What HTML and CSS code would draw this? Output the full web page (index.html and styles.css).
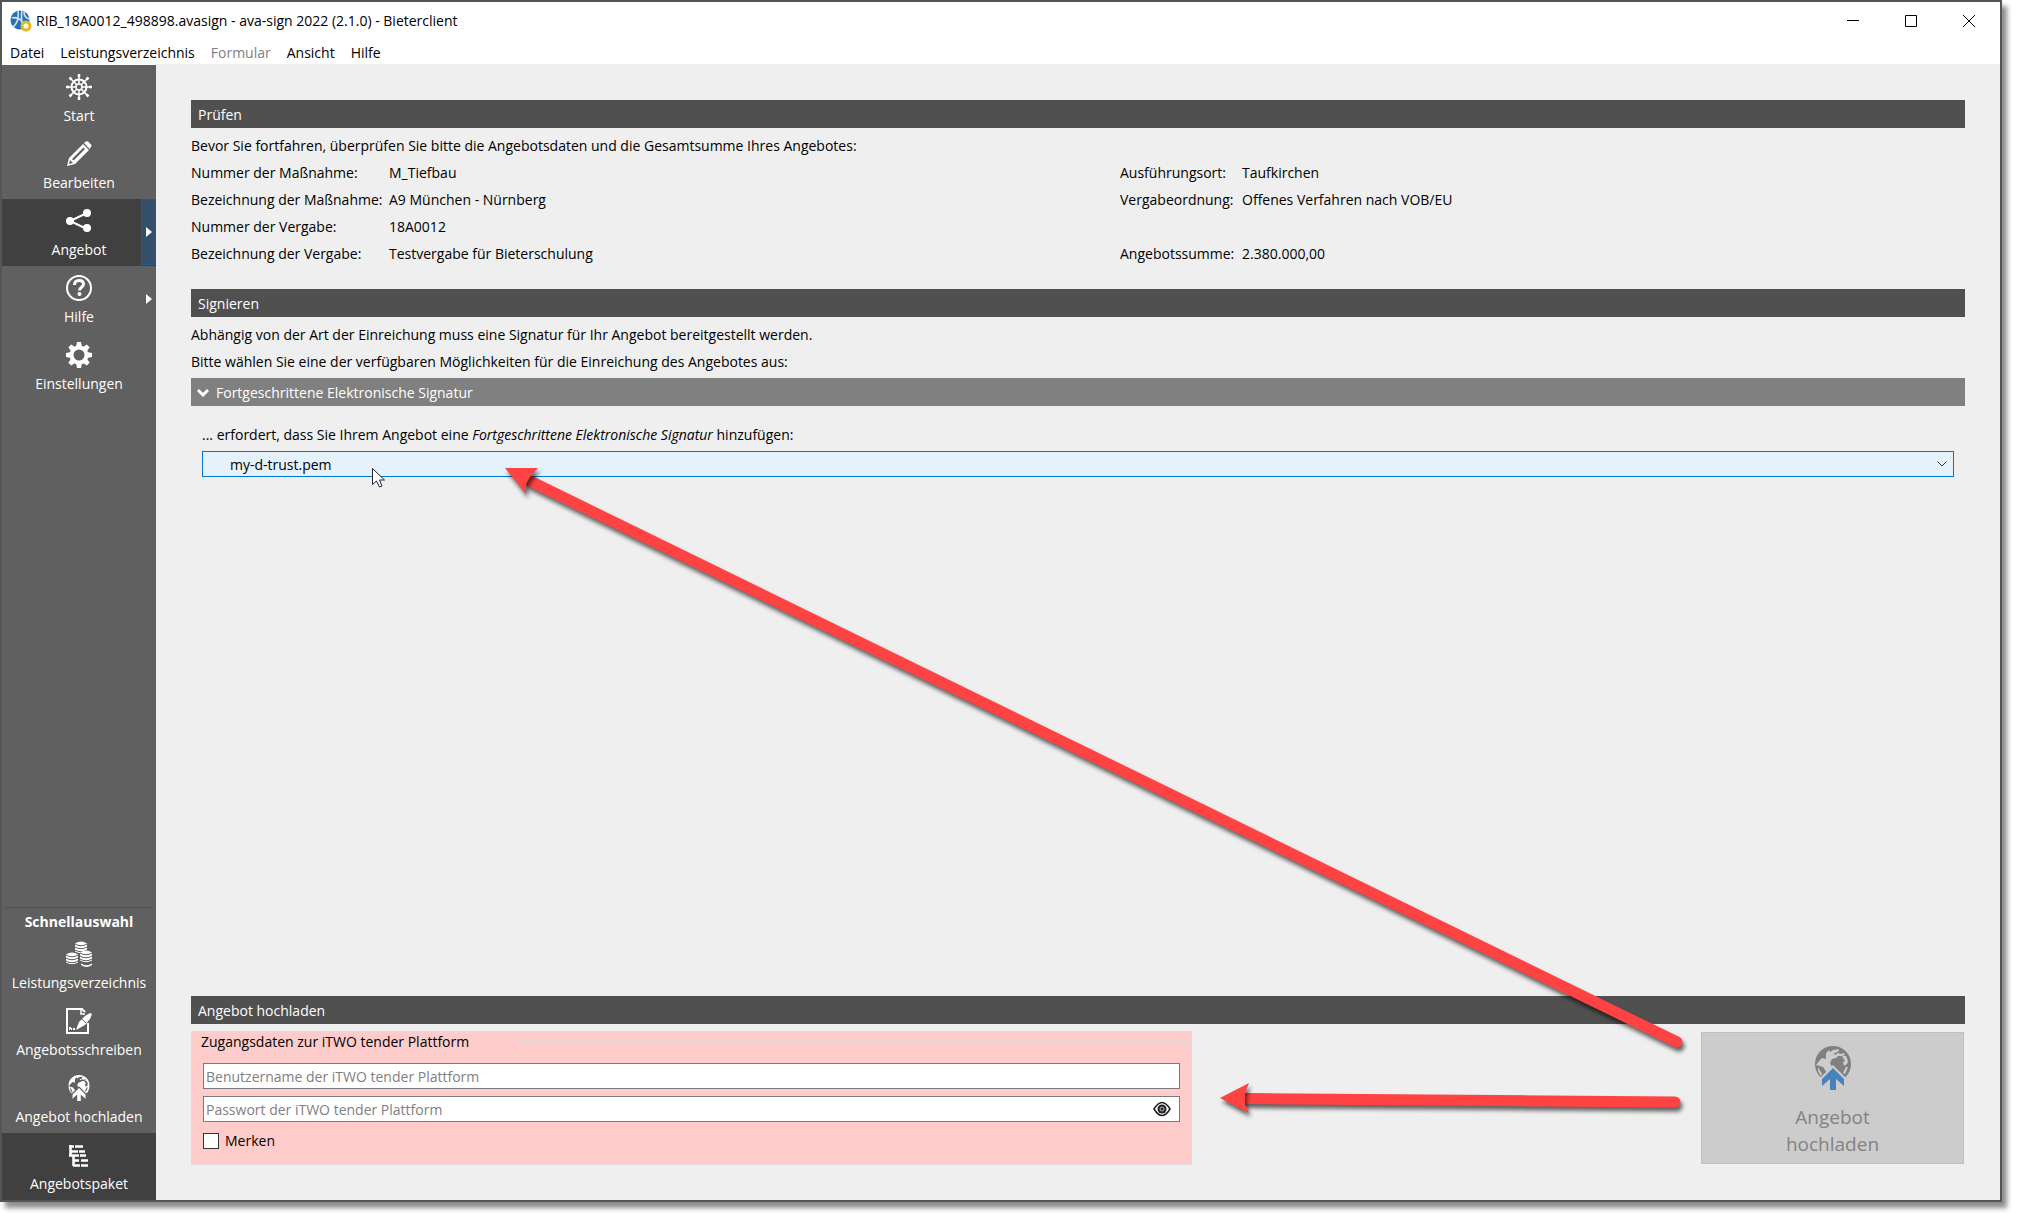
FILE: index.html
```html
<!DOCTYPE html>
<html lang="de">
<head>
<meta charset="utf-8">
<title>RIB_18A0012_498898.avasign - ava-sign 2022 (2.1.0) - Bieterclient</title>
<link rel="stylesheet" href="styles.css">
</head>
<body>
<svg class="defs" aria-hidden="true">
  <symbol id="globe" viewBox="0 0 36 44">
    <mask id="globe-mask">
      <rect width="36" height="44" fill="#fff"/>
      <path fill="#000" d="M4 15l3-3 4 1V7l3-3 1 2 3-2 6-1-1 3-4 1 1 2 3-2 3 1 3-1 1 2-3 1-4 0-2 2-4 1-2 4 2 4 3 1v4l-8 1-4-6-7-2z"/>
      <path fill="#000" d="M27 10l4 0 2 5-1 3-3 2-1-4 2-1z"/>
      <path fill="#000" d="M31 21l2 0-3 7-2-1z"/>
      <path fill="#000" d="M3 21l4 7-1 2-3-5z"/>
      <path fill="#000" d="M18 19L4 33v11h28V33z"/>
    </mask>
    <g mask="url(#globe-mask)">
      <circle cx="18" cy="18" r="18"/>
    </g>
    <path class="globe-arrow" d="M18 22l11 11v7l-8-7v11h-6V33l-8 7v-7z"/>
  </symbol>
</svg>
<div class="window">
  <header class="titlebar">
    <svg class="app-logo" viewBox="0 0 22 22" aria-hidden="true">
      <circle cx="10" cy="10" r="9.500" fill="#2a6fb5"/>
      <path d="M8 0c1 8-1 14-5 17M12 0c-1 6-1 10 1 19M2 8c4-1 9 0 13 8M14 2c0 4 2 6 5 7" fill="none" stroke="#cfe3f5" stroke-width="1.600"/>
      <circle cx="16" cy="16" r="4" fill="#fff" stroke="#e5b822" stroke-width="3"/>
    </svg>
    <h1 class="title">RIB_18A0012_498898.avasign - ava-sign 2022 (2.1.0) - Bieterclient</h1>
    <div class="window-controls">
      <button class="control" type="button" aria-label="Minimieren"><svg viewBox="0 0 12 12"><path d="M0 5.500h12"/></svg></button>
      <button class="control" type="button" aria-label="Maximieren"><svg viewBox="0 0 12 12"><path d="M.5.500h11v11H.5z"/></svg></button>
      <button class="control" type="button" aria-label="Schließen"><svg viewBox="0 0 12 12"><path d="M0 0l12 12M12 0L0 12"/></svg></button>
    </div>
  </header>
  <nav class="menubar" aria-label="Menü">
    <button class="menu" type="button">Datei</button>
    <button class="menu" type="button">Leistungsverzeichnis</button>
    <button class="menu" type="button" disabled>Formular</button>
    <button class="menu" type="button">Ansicht</button>
    <button class="menu" type="button">Hilfe</button>
  </nav>
  <div class="body">
    <aside class="sidebar">
      <button class="nav-item" type="button">
        <svg class="icon" viewBox="0 0 26 26"><g fill="none" stroke="#fff"><circle cx="13" cy="13" r="7.500" stroke-width="2"/><circle cx="13" cy="13" r="3" stroke-width="1.500"/><path d="M13 0v10M13 16v10M0 13h10M16 13h10M4 4l7 7M15 15l7 7M22 4l-7 7M11 15l-7 7" stroke-width="1.500"/><path d="M13 0v3M13 23v3M0 13h3M23 13h3M3.500 3.500l2 2M20.500 20.500l2 2M22.500 3.500l-2 2M5.500 20.500l-2 2" stroke-width="2.500"/></g></svg>
        <span>Start</span>
      </button>
      <button class="nav-item" type="button">
        <svg class="icon" viewBox="0 0 26 26"><path fill="#fff" fill-rule="evenodd" d="M1 25l2-8L17 3l6 6L9 23zM3 23l4-1-3-3zM6 18l1.500 1.500L19 8l-1.500-1.500z"/><path fill="#fff" d="M18 2l2-1.500q1-.5 2 0l3 3q1 1 0 2.500l-1.500 2z"/></svg>
        <span>Bearbeiten</span>
      </button>
      <div class="nav-split active">
        <button class="nav-item" type="button">
          <svg class="icon" viewBox="0 0 26 26"><path d="M21 5L4 13l17 8" fill="none" stroke="#fff" stroke-width="2"/><g fill="#fff"><circle cx="4" cy="13" r="4"/><circle cx="21" cy="5" r="4"/><circle cx="21" cy="20" r="4"/></g></svg>
          <span>Angebot</span>
        </button>
        <button class="nav-more" type="button" aria-label="Angebot: Untermenü"><svg viewBox="0 0 6 10"><path d="M0 0l6 5-6 5z"/></svg></button>
      </div>
      <div class="nav-split">
        <button class="nav-item" type="button">
          <svg class="icon" viewBox="0 0 26 26"><circle cx="13" cy="13" r="12" fill="none" stroke="#fff" stroke-width="2"/><path d="M8.500 10q0-4.500 4.500-4.500t4.500 3.800c0 3-4 3-4 6.200" fill="none" stroke="#fff" stroke-width="3"/><circle cx="13.500" cy="19" r="2" fill="#fff"/></svg>
          <span>Hilfe</span>
        </button>
        <button class="nav-more" type="button" aria-label="Hilfe: Untermenü"><svg viewBox="0 0 6 10"><path d="M0 0l6 5-6 5z"/></svg></button>
      </div>
      <button class="nav-item" type="button">
        <svg class="icon" viewBox="0 0 26 26"><circle cx="13" cy="13" r="7.500" fill="none" stroke="#fff" stroke-width="4"/><g fill="#fff"><path id="tooth" d="M10 5l1-5h4l1 5z"/><use href="#tooth" transform="rotate(45 13 13)"/><use href="#tooth" transform="rotate(90 13 13)"/><use href="#tooth" transform="rotate(135 13 13)"/><use href="#tooth" transform="rotate(180 13 13)"/><use href="#tooth" transform="rotate(225 13 13)"/><use href="#tooth" transform="rotate(270 13 13)"/><use href="#tooth" transform="rotate(315 13 13)"/></g></svg>
        <span>Einstellungen</span>
      </button>
      <section class="quick">
        <h2 class="quick-title">Schnellauswahl</h2>
        <button class="nav-item" type="button">
          <svg class="icon" viewBox="0 0 26 26"><g id="barrel"><path fill="#fff" d="M9 2.500q6-4 12 0v8q-6 3.500-12 0z"/><path d="M9 3q6 3.500 12 0M9 6q6 3.500 12 0M9 9q6 3.500 12 0" fill="none" stroke="#606060"/></g><use href="#barrel" transform="translate(-9 11)"/><use href="#barrel" transform="translate(5 9)"/><path d="M15 22.500q5.500 3.500 11 0v1.500q-5.500 4-11 0z" fill="#fff"/></svg>
          <span>Leistungsverzeichnis</span>
        </button>
        <button class="nav-item" type="button">
          <svg class="icon" viewBox="0 0 26 26"><path d="M22 15v10H1V1h15l3 3" fill="none" stroke="#fff" stroke-width="2"/><path d="M15 1v5h4" fill="none" stroke="#fff" stroke-width="1.500"/><path fill="#fff" d="M10 22l3-8 6-6 5-3 2 1-2 5-5 6z"/><path d="M3 21h1M5 21h1M7 21h2M4 19v2" stroke="#fff" stroke-width="2"/><path d="M16 11l4 4" stroke="#606060"/></svg>
          <span>Angebotsschreiben</span>
        </button>
        <button class="nav-item" type="button">
          <svg class="icon"><use href="#globe"/></svg>
          <span>Angebot hochladen</span>
        </button>
        <button class="nav-item active" type="button">
          <svg class="icon" viewBox="0 0 26 26"><path fill="none" stroke="#fff" stroke-width="2.500" d="M4.500 3v10M3 4.500h5M9 4.500h8M4 9.500h8M13 9.500h6M7.500 14v10M3 13.500h10M14 13.500h6M7 18.500h6M15 18.500h7M7 23.500h7M15 23.500h7"/></svg>
          <span>Angebotspaket</span>
        </button>
      </section>
    </aside>
    <main class="content">
      <section class="panel">
        <h2 class="bar">Prüfen</h2>
        <p class="line first">Bevor Sie fortfahren, überprüfen Sie bitte die Angebotsdaten und die Gesamtsumme Ihres Angebotes:</p>
        <dl class="facts">
          <dt>Nummer der Maßnahme:</dt><dd>M_Tiefbau</dd>
          <dt>Ausführungsort:</dt><dd>Taufkirchen</dd>
          <dt>Bezeichnung der Maßnahme:</dt><dd>A9 München - Nürnberg</dd>
          <dt>Vergabeordnung:</dt><dd>Offenes Verfahren nach VOB/EU</dd>
          <dt>Nummer der Vergabe:</dt><dd class="wide">18A0012</dd>
          <dt>Bezeichnung der Vergabe:</dt><dd>Testvergabe für Bieterschulung</dd>
          <dt>Angebotssumme:</dt><dd>2.380.000,00</dd>
        </dl>
      </section>
      <section class="panel sign">
        <h2 class="bar">Signieren</h2>
        <p class="line first">Abhängig von der Art der Einreichung muss eine Signatur für Ihr Angebot bereitgestellt werden.</p>
        <p class="line">Bitte wählen Sie eine der verfügbaren Möglichkeiten für die Einreichung des Angebotes aus:</p>
        <button class="bar bar-light" type="button" aria-expanded="true">
          <svg class="fold" viewBox="0 0 12 10"><path d="M1 2l5 5 5-5"/></svg>
          Fortgeschrittene Elektronische Signatur
        </button>
        <div class="signature">
          <label class="line" for="certificate">... erfordert, dass Sie Ihrem Angebot eine <em>Fortgeschrittene Elektronische Signatur</em> hinzufügen:</label>
          <div class="combo">
            <select id="certificate"><option>my-d-trust.pem</option></select>
            <svg class="chevron" viewBox="0 0 10 6"><path d="M.5.500L5 5 9.500.500"/></svg>
          </div>
        </div>
      </section>
      <section class="upload">
        <h2 class="bar">Angebot hochladen</h2>
        <form class="upload-row">
          <div class="login" role="group" aria-labelledby="login-title">
            <div class="login-title"><span id="login-title">Zugangsdaten zur iTWO tender Plattform</span></div>
            <div class="login-fields">
              <input class="field" type="text" aria-label="Benutzername" placeholder="Benutzername der iTWO tender Plattform">
              <div class="password">
                <input class="field" type="password" aria-label="Passwort" placeholder="Passwort der iTWO tender Plattform">
                <button class="reveal" type="button" aria-label="Passwort anzeigen"><svg viewBox="0 0 18 16"><path d="M1 8q8-13 16 0q-8 13-16 0z" fill="#fff" stroke="#222" stroke-width="1.500"/><circle cx="9" cy="8" r="4.500" fill="#222"/><circle cx="9" cy="8" r="2" fill="none" stroke="#bbb"/></svg></button>
              </div>
              <label class="remember"><input type="checkbox">Merken</label>
            </div>
          </div>
          <button class="submit" type="submit" disabled>
            <svg class="submit-icon"><use href="#globe"/></svg>
            <span>Angebot<br>hochladen</span>
          </button>
        </form>
      </section>
    </main>
  </div>
</div>
<svg class="annotations" viewBox="0 0 2017 1217" aria-hidden="true">
  <path class="shaft" d="M530 481L1677 1042"/>
  <path class="head" d="M505 468h33l-8 9-4 7v10z"/>
  <path class="shaft" d="M1243 1098.500L1675 1102"/>
  <path class="head" d="M1220 1098l29-15-4 10v11l4 9z"/>
  <path class="pointer" d="M372.500 468.500v16l4-3.500 3 6 2.500-1-2.500-6h5z"/>
</svg>
</body>
</html>
```
FILE: styles.css
```css
* {
  box-sizing: border-box;
}

body {
  margin: 0;
  padding: 0 15px 15px 0;
  min-height: 100vh;
  display: flex;
  position: relative;
  background: #fff;
  color: #000;
  font: 14px/20px "Open Sans", "Noto Sans", sans-serif;
}

button,
input,
select {
  font: inherit;
  color: inherit;
  border: 0;
  margin: 0;
  padding: 0;
  background: none;
  border-radius: 0;
}

h1,
h2,
p,
dl,
dd {
  margin: 0;
  font-size: inherit;
  font-weight: normal;
}

.defs {
  position: absolute;
  width: 0;
  height: 0;
}

.window {
  flex: 1;
  display: flex;
  flex-direction: column;
  border: 2px solid #555;
  background: #fff;
  box-shadow: 5px 6px 5px rgba(0, 0, 0, 0.45);
}

/* Title bar and menu */

.titlebar {
  display: flex;
  align-items: center;
  height: 38px;
  padding: 0 2px 0 8px;
}

.app-logo {
  width: 22px;
  height: 22px;
  margin-right: 4px;
}

.title {
  flex: 1;
}

.window-controls {
  display: flex;
}

.control {
  width: 58px;
  height: 38px;
}

.control svg {
  display: block;
  width: 12px;
  height: 12px;
  margin: 0 auto;
  fill: none;
  stroke: #000;
}

.menubar {
  display: flex;
  height: 24px;
  gap: 16px;
  padding: 1px 8px 0;
}

.menu:disabled {
  color: #808080;
}

/* Sidebar */

.body {
  flex: 1;
  display: flex;
}

.sidebar {
  width: 154px;
  display: flex;
  flex-direction: column;
  margin-top: 1px;
  background: #606060;
  color: #fff;
}

.nav-item {
  display: flex;
  flex-direction: column;
  align-items: center;
  gap: 6px;
  width: 154px;
  height: 67px;
  padding-top: 9px;
  white-space: nowrap;
}

.active {
  background: #404040;
}

.icon {
  width: 26px;
  height: 26px;
  fill: #fff;
}

.nav-split {
  position: relative;
}

.nav-more {
  position: absolute;
  top: 0;
  right: 0;
  width: 15px;
  height: 66px;
}

.nav-more svg {
  display: block;
  width: 6px;
  height: 10px;
  margin: 0 auto;
  fill: #fff;
}

.active .nav-more {
  background: #334f69;
  border: 1px solid #1d5c93;
}

.quick {
  margin-top: auto;
}

.quick-title {
  margin: 0 3px;
  padding-top: 4px;
  border-top: 1px solid #505050;
  font-weight: bold;
  text-align: center;
}

/* Main area */

.content {
  flex: 1;
  display: flex;
  flex-direction: column;
  padding: 36px 35px 35px;
  background: #efefef;
}

.bar {
  display: flex;
  align-items: center;
  width: 100%;
  height: 28px;
  padding: 2px 0 0 7px;
  background: #505050;
  color: #fff;
}

.bar-light {
  gap: 7px;
  padding-left: 6px;
  margin-top: 3px;
  background: #808080;
}

.fold {
  width: 12px;
  height: 10px;
  fill: none;
  stroke: #fff;
  stroke-width: 3;
}

.line {
  display: block;
  line-height: 27px;
}

.first {
  margin-top: 4px;
}

.facts {
  display: grid;
  grid-template-columns: 198px 731fr 122px 723fr;
  line-height: 27px;
}

.wide {
  grid-column: span 3;
}

.sign {
  margin-top: 22px;
}

.signature {
  padding: 15px 11px;
}

.combo {
  position: relative;
  margin-top: 3px;
}

.combo select {
  display: block;
  appearance: none;
  width: 100%;
  height: 26px;
  padding: 1px 0 0 27px;
  border: 1px solid #0078d7;
  background: #e5f1fb;
}

.chevron {
  position: absolute;
  top: 10px;
  right: 7px;
  width: 10px;
  height: 6px;
  fill: none;
  stroke: #333;
}

.upload {
  margin-top: auto;
}

.upload-row {
  display: flex;
  justify-content: space-between;
  margin-top: 7px;
}

.login {
  width: 1001px;
  height: 134px;
  border: 1px solid #dcdcdc;
  background: #ffcccc;
}

.login-title {
  display: flex;
  align-items: center;
  padding-left: 9px;
}

.login-title::after {
  content: "";
  flex: 1;
  margin-left: 47px;
  border-top: 1px solid #dcdcdc;
}

.login-fields {
  display: flex;
  flex-direction: column;
  gap: 7px;
  padding: 11px 11px 0;
}

.field {
  display: block;
  width: 100%;
  height: 26px;
  padding: 0 2px;
  border: 1px solid #7a7a7a;
  background: #fff;
}

.field::placeholder {
  color: #808080;
  opacity: 1;
}

.password {
  position: relative;
}

.reveal {
  position: absolute;
  top: 5px;
  right: 9px;
  width: 18px;
  height: 16px;
}

.reveal svg {
  display: block;
}

.remember {
  display: flex;
  align-items: center;
  align-self: flex-start;
  gap: 6px;
  margin-top: 2px;
}

.remember input {
  appearance: none;
  width: 16px;
  height: 16px;
  border: 1px solid #333;
  background: #fff;
}

.submit {
  display: flex;
  flex-direction: column;
  align-items: center;
  width: 263px;
  height: 132px;
  margin: 1px 1px 0 0;
  padding-top: 13px;
  gap: 14px;
  border: 1px solid #bfbfbf;
  background: #ccc;
  color: #838383;
  font-size: 19px;
  line-height: 27px;
}

.submit-icon {
  width: 36px;
  height: 44px;
  fill: #808080;
  --arrow: #4a82bd;
}

.globe-arrow {
  fill: var(--arrow, #fff);
}

/* Arrows and pointer drawn over the window */

.annotations {
  position: absolute;
  top: 0;
  left: 0;
  width: 100%;
  pointer-events: none;
}

.shaft,
.head {
  filter: drop-shadow(2px 4px 2px rgba(0, 0, 0, 0.6));
}

.shaft {
  fill: none;
  stroke: #ff4343;
  stroke-width: 11;
  stroke-linecap: round;
}

.head {
  fill: #ff4343;
}

.pointer {
  fill: #fff;
  stroke: #223;
}
```
